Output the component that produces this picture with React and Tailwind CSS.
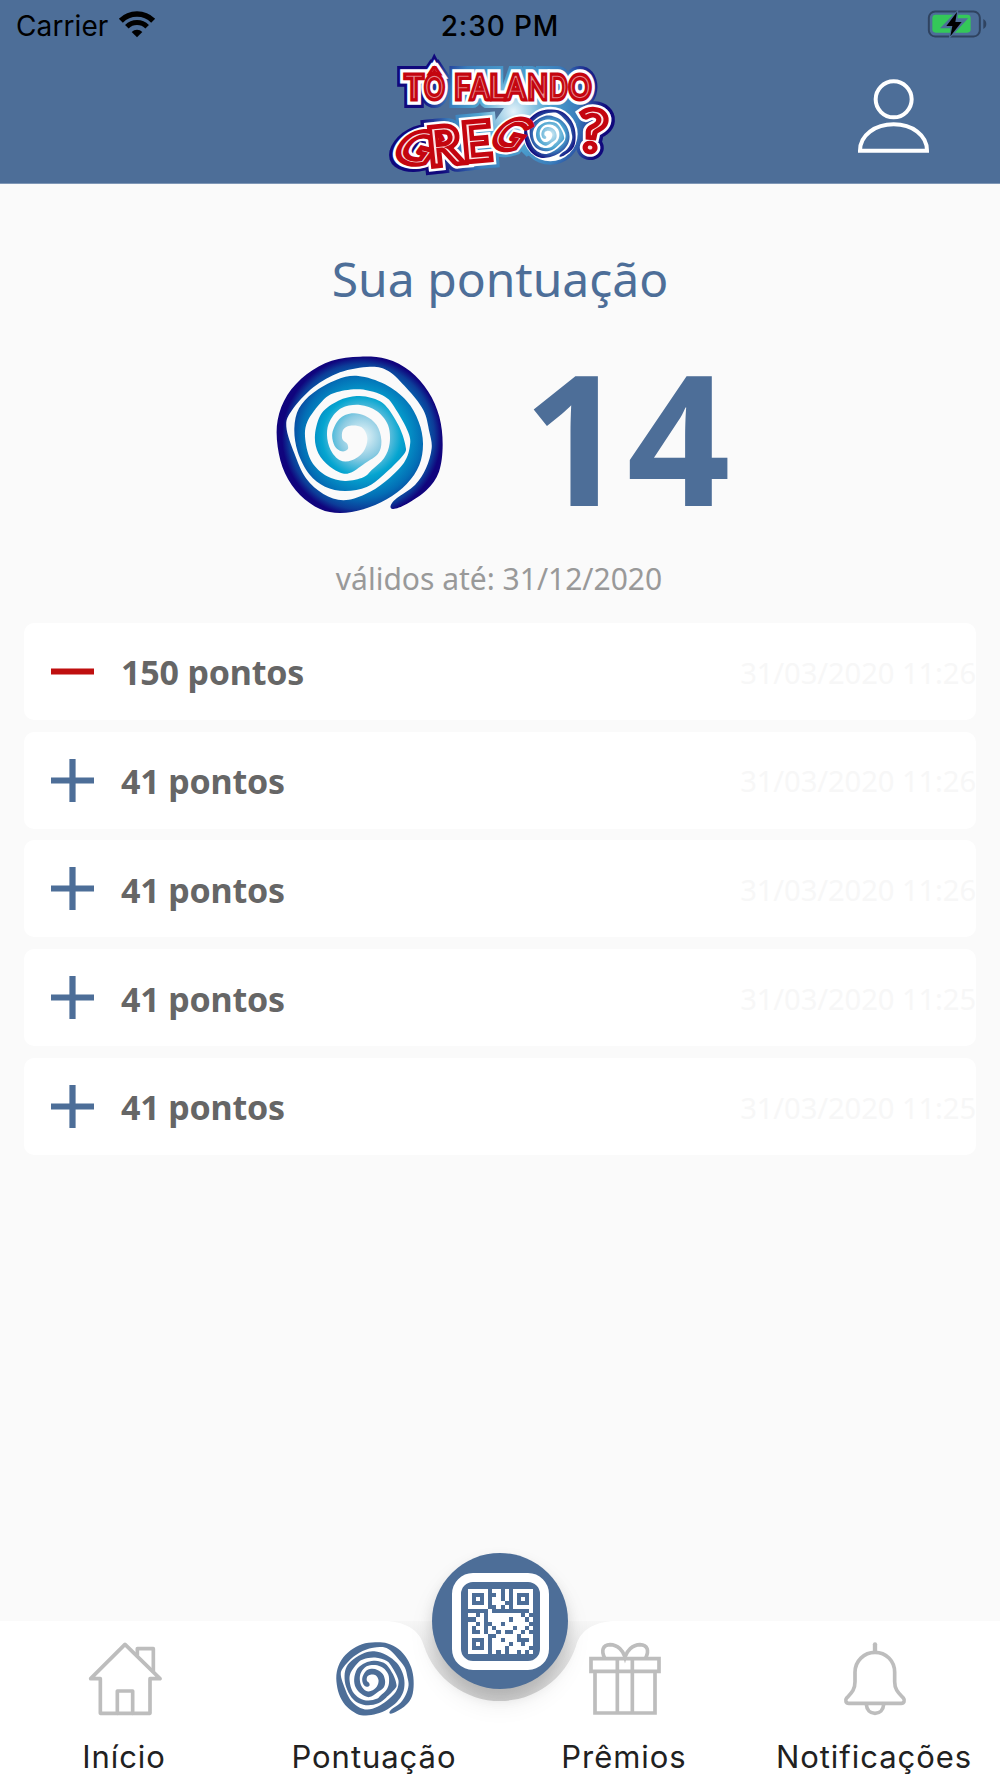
import React from "react";

// -------- SPIRAL --------
// outer edge from the tail to the centre, then the inner edge back out
const SPIRAL_POINTS = [
  [400, 507], [440, 492], [500, 450], [537, 395], [548, 315], [538, 230], [505, 155],
  [450, 93], [380, 57], [300, 50], [215, 62], [140, 103], [82, 165], [53, 240],
  [53, 320], [75, 400], [120, 465], [180, 507], [240, 519], [310, 508], [380, 478],
  [440, 432], [478, 375], [489, 310], [476, 245], [440, 183], [375, 133], [295, 108],
  [230, 119], [160, 158], [117, 205], [103, 265], [113, 335], [148, 403], [195, 440],
  [255, 453], [320, 441], [370, 405], [430, 345], [436, 315], [415, 255], [375, 195],
  [335, 174], [290, 168], [235, 182], [185, 220], [165, 285], [175, 340], [210, 380],
  [262, 401], [315, 370], [355, 340], [364, 300], [350, 255], [315, 227], [275, 220],
  [238, 237], [217, 280], [224, 318], [245, 334], [263, 328], [262, 312], [247, 297],
  [249, 270], [270, 257], [305, 262], [322, 295], [310, 335], [275, 361], [240, 361],
  [212, 330], [201, 285], [210, 242], [245, 204], [300, 195], [350, 213], [384, 255],
  [389, 310], [372, 355], [335, 390], [310, 412], [255, 423], [200, 408], [155, 365],
  [136, 300], [142, 245], [185, 185], [225, 158], [300, 148], [375, 170], [410, 212],
  [444, 275], [450, 315], [432, 368], [375, 425], [315, 463], [250, 481], [190, 462],
  [138, 415], [103, 340], [79, 260], [95, 212], [160, 142], [240, 97], [330, 80],
  [385, 93], [440, 145], [490, 210], [508, 275], [515, 325], [498, 385], [465, 435],
  [410, 475], [392, 497],
];

function smoothPath(points) {
  const n = points.length;
  let d = `M${points[0][0]} ${points[0][1]}`;
  for (let i = 0; i < n; i++) {
    const p0 = points[(i - 1 + n) % n];
    const p1 = points[i];
    const p2 = points[(i + 1) % n];
    const p3 = points[(i + 2) % n];
    const c1 = [p1[0] + (p2[0] - p0[0]) / 6, p1[1] + (p2[1] - p0[1]) / 6];
    const c2 = [p2[0] - (p3[0] - p1[0]) / 6, p2[1] - (p3[1] - p1[1]) / 6];
    d += `C${c1[0].toFixed(1)} ${c1[1].toFixed(1)} ${c2[0].toFixed(1)} ${c2[1].toFixed(1)} ${p2[0]} ${p2[1]}`;
  }
  return d + "Z";
}

const SPIRAL = smoothPath(SPIRAL_POINTS);

function SpiralLarge() {
  return (
    <svg className="h-[190px] w-[200px] shrink-0" viewBox="0 0 600 570">
      <defs>
        <radialGradient id="spiral" gradientUnits="userSpaceOnUse" cx="305" cy="290" r="260">
          <stop offset="0" stopColor="#eef8fb" />
          <stop offset="0.25" stopColor="#8ccbe2" />
          <stop offset="0.46" stopColor="#05a5d0" />
          <stop offset="0.7" stopColor="#036eb5" />
          <stop offset="0.84" stopColor="#0c3c98" />
          <stop offset="0.92" stopColor="#10047d" />
        </radialGradient>
      </defs>
      <path d={SPIRAL} fill="url(#spiral)" />
    </svg>
  );
}

// -------- LOGO --------
const LINE_ONE = [
  { ch: "T", x: 132, y: 177, size: 100, sx: 0.92 },
  { ch: "Ô", x: 193, y: 177, size: 98, sx: 0.76 },
  { ch: "F", x: 277, y: 177, size: 100, sx: 0.84 },
  { ch: "A", x: 329, y: 177, size: 100, sx: 0.8 },
  { ch: "L", x: 382, y: 177, size: 100, sx: 0.88 },
  { ch: "A", x: 437, y: 177, size: 100, sx: 0.84 },
  { ch: "N", x: 503, y: 177, size: 100, sx: 0.78 },
  { ch: "D", x: 565, y: 177, size: 100, sx: 0.7 },
  { ch: "O", x: 630, y: 177, size: 100, sx: 0.84 },
];

const LINE_TWO = [
  { ch: "G", x: 112, y: 366, size: 142, sx: 1.02, rot: 14, skew: -22 },
  { ch: "R", x: 228, y: 372, size: 156, sx: 1.02, rot: -6 },
  { ch: "E", x: 324, y: 360, size: 158, sx: 0.96, rot: -5 },
  { ch: "G", x: 394, y: 324, size: 134, sx: 0.86, rot: 14, skew: -22 },
  { ch: "?", x: 664, y: 332, size: 168, sx: 1.1, rot: 5 },
];

function Letters({ letters, ...props }) {
  return (
    <g
      fontFamily="Lato, sans-serif"
      fontWeight="400"
      textAnchor="middle"
      strokeLinejoin="miter"
      strokeMiterlimit="3"
      {...props}
    >
      {letters.map((l, i) => (
        <text
          key={i}
          fontSize={l.size}
          transform={`translate(${l.x} ${l.y}) rotate(${l.rot || 0}) skewX(${l.skew || 0}) scale(${l.sx} 1)`}
        >
          {l.ch}
        </text>
      ))}
    </g>
  );
}

function Logo() {
  const all = [...LINE_ONE, ...LINE_TWO];

  return (
    <svg className="h-[150px] w-[260px]" viewBox="0 0 780 450">
      <defs>
        <mask id="halo-mask" maskUnits="userSpaceOnUse" x="0" y="0" width="780" height="450">
          <Letters letters={all} fill="#fff" stroke="#fff" strokeWidth="54" />
          <path d="M415 185H650V250L470 350L370 250Z" fill="#fff" />
          <circle cx="541" cy="284" r="90" fill="#fff" />
        </mask>
        <radialGradient id="halo" gradientUnits="userSpaceOnUse" cx="430" cy="215" r="350">
          <stop offset="0" stopColor="#e4f3fa" />
          <stop offset="0.3" stopColor="#4ea3d0" />
          <stop offset="0.55" stopColor="#3a7dbb" />
          <stop offset="0.8" stopColor="#10087c" />
        </radialGradient>
        <radialGradient id="logo-spiral" gradientUnits="userSpaceOnUse" cx="310" cy="290" r="270">
          <stop offset="0" stopColor="#cfeaf5" />
          <stop offset="0.5" stopColor="#4aa3cf" />
          <stop offset="0.95" stopColor="#10087c" />
        </radialGradient>
      </defs>
      <rect width="780" height="450" fill="url(#halo)" mask="url(#halo-mask)" />
      <Letters letters={all} fill="#fff" stroke="#fff" strokeWidth="35" />
      <circle cx="541" cy="282" r="82" fill="#fff" />
      <path d={SPIRAL} fill="url(#logo-spiral)" transform="translate(447 193) scale(0.31)" />
      <Letters letters={LINE_ONE} fill="#c4050f" stroke="#c4050f" strokeWidth="15" />
      <Letters letters={LINE_ONE} fill="#e88a90" stroke="#c4050f" strokeWidth="5" />
      <Letters letters={LINE_TWO} fill="#c4050f" stroke="#c4050f" strokeWidth="20" />
      <Letters letters={LINE_TWO} fill="#fbe3e4" stroke="#c4050f" strokeWidth="8.500" />
    </svg>
  );
}

// -------- STATUS BAR --------
function StatusBar() {
  return (
    <div className="grid h-[50px] grid-cols-3 items-center pt-[2px] font-['Inter',sans-serif] text-[28px] leading-none text-black">
      <div className="flex items-center gap-[10px] pl-[16px]">
        <span className="tracking-[0.1px]">Carrier</span>
        <svg className="mb-[5px] h-[28px] w-[38px]" viewBox="0 0 114 84" fill="none" stroke="#000">
          <path d="M8.5 32A68.6 68.6 0 0 1 105.500 32" strokeWidth="17" />
          <path d="M26.500 50A43 43 0 0 1 87.500 50" strokeWidth="15" />
          <path d="M57 82L41 66A23 23 0 0 1 73 66Z" fill="#000" stroke="none" />
        </svg>
      </div>
      <span className="text-center font-medium tracking-[0.9px]">2:30 PM</span>
      <div className="flex justify-end pr-[13px] pb-[4px]">
        <svg className="h-[30px] w-[60px]" viewBox="443 28 180 90">
          <rect x="448.500" y="35.500" width="153" height="75" rx="19" fill="none" stroke="#2f4360" strokeWidth="6" />
          <path d="M612 58Q621 63 621 73T612 88Z" fill="#2f4360" />
          <rect x="459" y="45" width="115" height="54" rx="10" fill="#34c759" />
          <path d="M534 36L488 83H517L512 111L561 58H532Z" fill="#4d6e98" stroke="#4d6e98" strokeWidth="5" />
          <path d="M533 37L501 79H519L513 110L547 67H528Z" fill="#000" />
        </svg>
      </div>
    </div>
  );
}

function Header() {
  return (
    <header className="h-[184px] border-b border-[#7f97b6] bg-[#4d6e98]">
      <StatusBar />
      <div className="-mt-[10px] grid grid-cols-[1fr_260px_1fr] items-start">
        <span />
        <Logo />
        <svg
          className="mt-[36px] ml-[225px] h-[80px] w-[80px]"
          viewBox="225 228 240 240"
          fill="none"
          stroke="#fff"
          strokeWidth="12"
        >
          <circle cx="341" cy="298" r="54" />
          <path d="M240 452H441C441 405 396 373 341 373S240 405 240 452Z" />
        </svg>
      </div>
    </header>
  );
}

// -------- HISTORY --------
const history = [
  { type: "out", points: 150, date: "31/03/2020 11:26" },
  { type: "in", points: 41, date: "31/03/2020 11:26" },
  { type: "in", points: 41, date: "31/03/2020 11:26" },
  { type: "in", points: 41, date: "31/03/2020 11:25" },
  { type: "in", points: 41, date: "31/03/2020 11:25" },
];

function HistoryRow({ type, points, date }) {
  return (
    <li className="flex h-[97px] items-center rounded-[10px] bg-white pl-[27px]">
      <svg className="h-[43px] w-[43px]" viewBox="0 0 43 43" strokeWidth="6.200">
        {type === "out" ? (
          <path d="M0 21.500H43" stroke="#bf0f0f" />
        ) : (
          <path d="M0 21.500H43M21.500 0V43" stroke="#4d6e98" />
        )}
      </svg>
      <span className="ml-[27px] pt-[3px] text-[34px] tracking-[-0.2px] font-bold text-[#666666]">{points} pontos</span>
      <span className="ml-auto pt-[4px] text-[29.200px] tracking-[-0.100px] text-[#f7f7f7]">{date}</span>
    </li>
  );
}

// -------- BOTTOM NAV --------
function HomeIcon() {
  return (
    <svg className="h-[74px] w-[78px]" viewBox="78 96 234 222" fill="none" stroke="#bdbdbd" strokeWidth="11" strokeLinejoin="round" strokeLinecap="round">
      <path d="M121 206H92L195 103L300 206H270V310H121Z" />
      <path d="M172 310V243H218V310M232 136V116H280V184" />
    </svg>
  );
}

function GiftIcon() {
  return (
    <svg className="h-[74px] w-[78px]" viewBox="78 96 234 222" fill="none" stroke="#bdbdbd" strokeWidth="11">
      <path d="M93 146H297V184H93ZM105 184V309H285V184M172 146V309M217 146V309" />
      <path d="M134 144C123 122 128 105 150 104C174 104 190 124 195 141C200 124 217 104 240 104C263 105 268 122 257 144" />
    </svg>
  );
}

function BellIcon() {
  return (
    <svg className="h-[74px] w-[78px]" viewBox="828 96 234 222" fill="none" stroke="#bdbdbd" strokeWidth="11" strokeLinejoin="round" strokeLinecap="round">
      <path d="M945 103V124" strokeWidth="13" />
      <path d="M945 127C912 127 885 153 885 187V215C885 240 874 249 860 264C854 271 858 280 866 280H1024C1032 280 1036 271 1030 264C1016 249 1004 240 1004 215V187C1004 153 978 127 945 127Z" />
      <path d="M919 283C920 300 931 310 945 310S970 300 971 283" />
    </svg>
  );
}

function SpiralIcon() {
  return (
    <svg className="h-[74px] w-[78px]" viewBox="48 48 502 474" preserveAspectRatio="none">
      <path d={SPIRAL} fill="#4d6e98" />
    </svg>
  );
}

const QR = [
  "xxxxx.xx.x.xxxxx",
  "x...x..x.x.x...x",
  "x.x.x.xx.x.x.x.x",
  "x...x.xxx..x...x",
  "xxxxx..x.x.xxxxx",
  ".....x.........x",
  "xx.x.xxxxxxxx.x.",
  "..xx.xxxxx.xxx.x",
  "xx.x..xx.xxxxxx.",
  "x.xx.x.xxxx.xx.x",
  "x..x.xx.x..xx.x.",
  "xxxxx..xxxxx.xxx",
  "x...x.xx.xxx...x",
  "x.x.x.xxxx.xx.xx",
  "x...x.xxx.xxxxx.",
  "xxxxx.x.x.xx.x.x",
];

function QrButton() {
  return (
    <button className="absolute -top-[68px] left-[432px] flex h-[136px] w-[136px] items-center justify-center rounded-full bg-[#4d6e98] shadow-[0_8px_14px_rgba(0,0,0,0.12),0_14px_26px_rgba(0,0,0,0.08)]">
      <span className="flex h-[97px] w-[97px] items-center justify-center rounded-[21px] border-[9px] border-white">
        <svg className="h-[65px] w-[65px]" viewBox="0 0 16 16" shapeRendering="crispEdges">
          {QR.flatMap((row, y) =>
            [...row].map((c, x) =>
              c === "x" ? <rect key={`${x}-${y}`} x={x} y={y} width="1" height="1" fill="#fff" /> : null
            )
          )}
        </svg>
      </span>
    </button>
  );
}

const tabs = [
  { label: "Início", Icon: HomeIcon },
  { label: "Pontuação", Icon: SpiralIcon },
  { label: "Prêmios", Icon: GiftIcon },
  { label: "Notificações", Icon: BellIcon },
];

function BottomNav() {
  return (
    <nav className="relative h-[157px]">
      {/* bar with the notch cut out around the button */}
      <svg className="absolute inset-0 h-[157px] w-[1000px]" viewBox="0 0 1000 157">
        <defs>
          <linearGradient id="notch" x1="0" y1="0" x2="0" y2="1">
            <stop offset="0" stopColor="#f6f6f6" />
            <stop offset="0.5" stopColor="#e4e4e4" />
            <stop offset="1" stopColor="#d4d4d4" />
          </linearGradient>
        </defs>
        <rect x="390" width="220" height="84" fill="url(#notch)" />
        <path
          d="M0 0H385C409 1 420 11 424 25A80 80 0 0 0 576 25C580 11 591 1 615 0H1000V157H0Z"
          fill="#fff"
        />
      </svg>
      <QrButton />
      <div className="relative grid grid-cols-4 pt-[21px]">
        {tabs.map(({ label, Icon }) => (
          <div key={label} className="flex flex-col items-center">
            <Icon />
            <span className="mt-[21px] pr-[2px] font-['Inter',sans-serif] text-[31px] leading-[40px] tracking-[0.950px] text-[#212121]">
              {label}
            </span>
          </div>
        ))}
      </div>
    </nav>
  );
}

export default function App() {
  return (
    <div className="flex h-[1778px] w-[1000px] flex-col overflow-hidden bg-[#fafafa] font-['Noto_Sans','Open_Sans',sans-serif]">
      <Header />

      <main className="flex flex-1 flex-col pt-[62px]">
        <h1 className="text-center text-[48px] leading-[65.400px] text-[#4d6e98]">Sua pontuação</h1>
        <div className="flex h-[248px] items-center pl-[260px]">
          <SpiralLarge />
          <span className="ml-[63px] text-[181.300px] leading-[247px] font-bold text-[#4d6e98]">14</span>
        </div>
        <p className="pr-[2px] text-center text-[30px] leading-[40px] text-[#999999]">válidos até: 31/12/2020</p>

        <ul className="mt-[23.500px] flex flex-col gap-[11.750px] px-[24px]">
          {history.map((item, idx) => (
            <HistoryRow key={idx} {...item} />
          ))}
        </ul>
      </main>

      <BottomNav />
    </div>
  );
}
